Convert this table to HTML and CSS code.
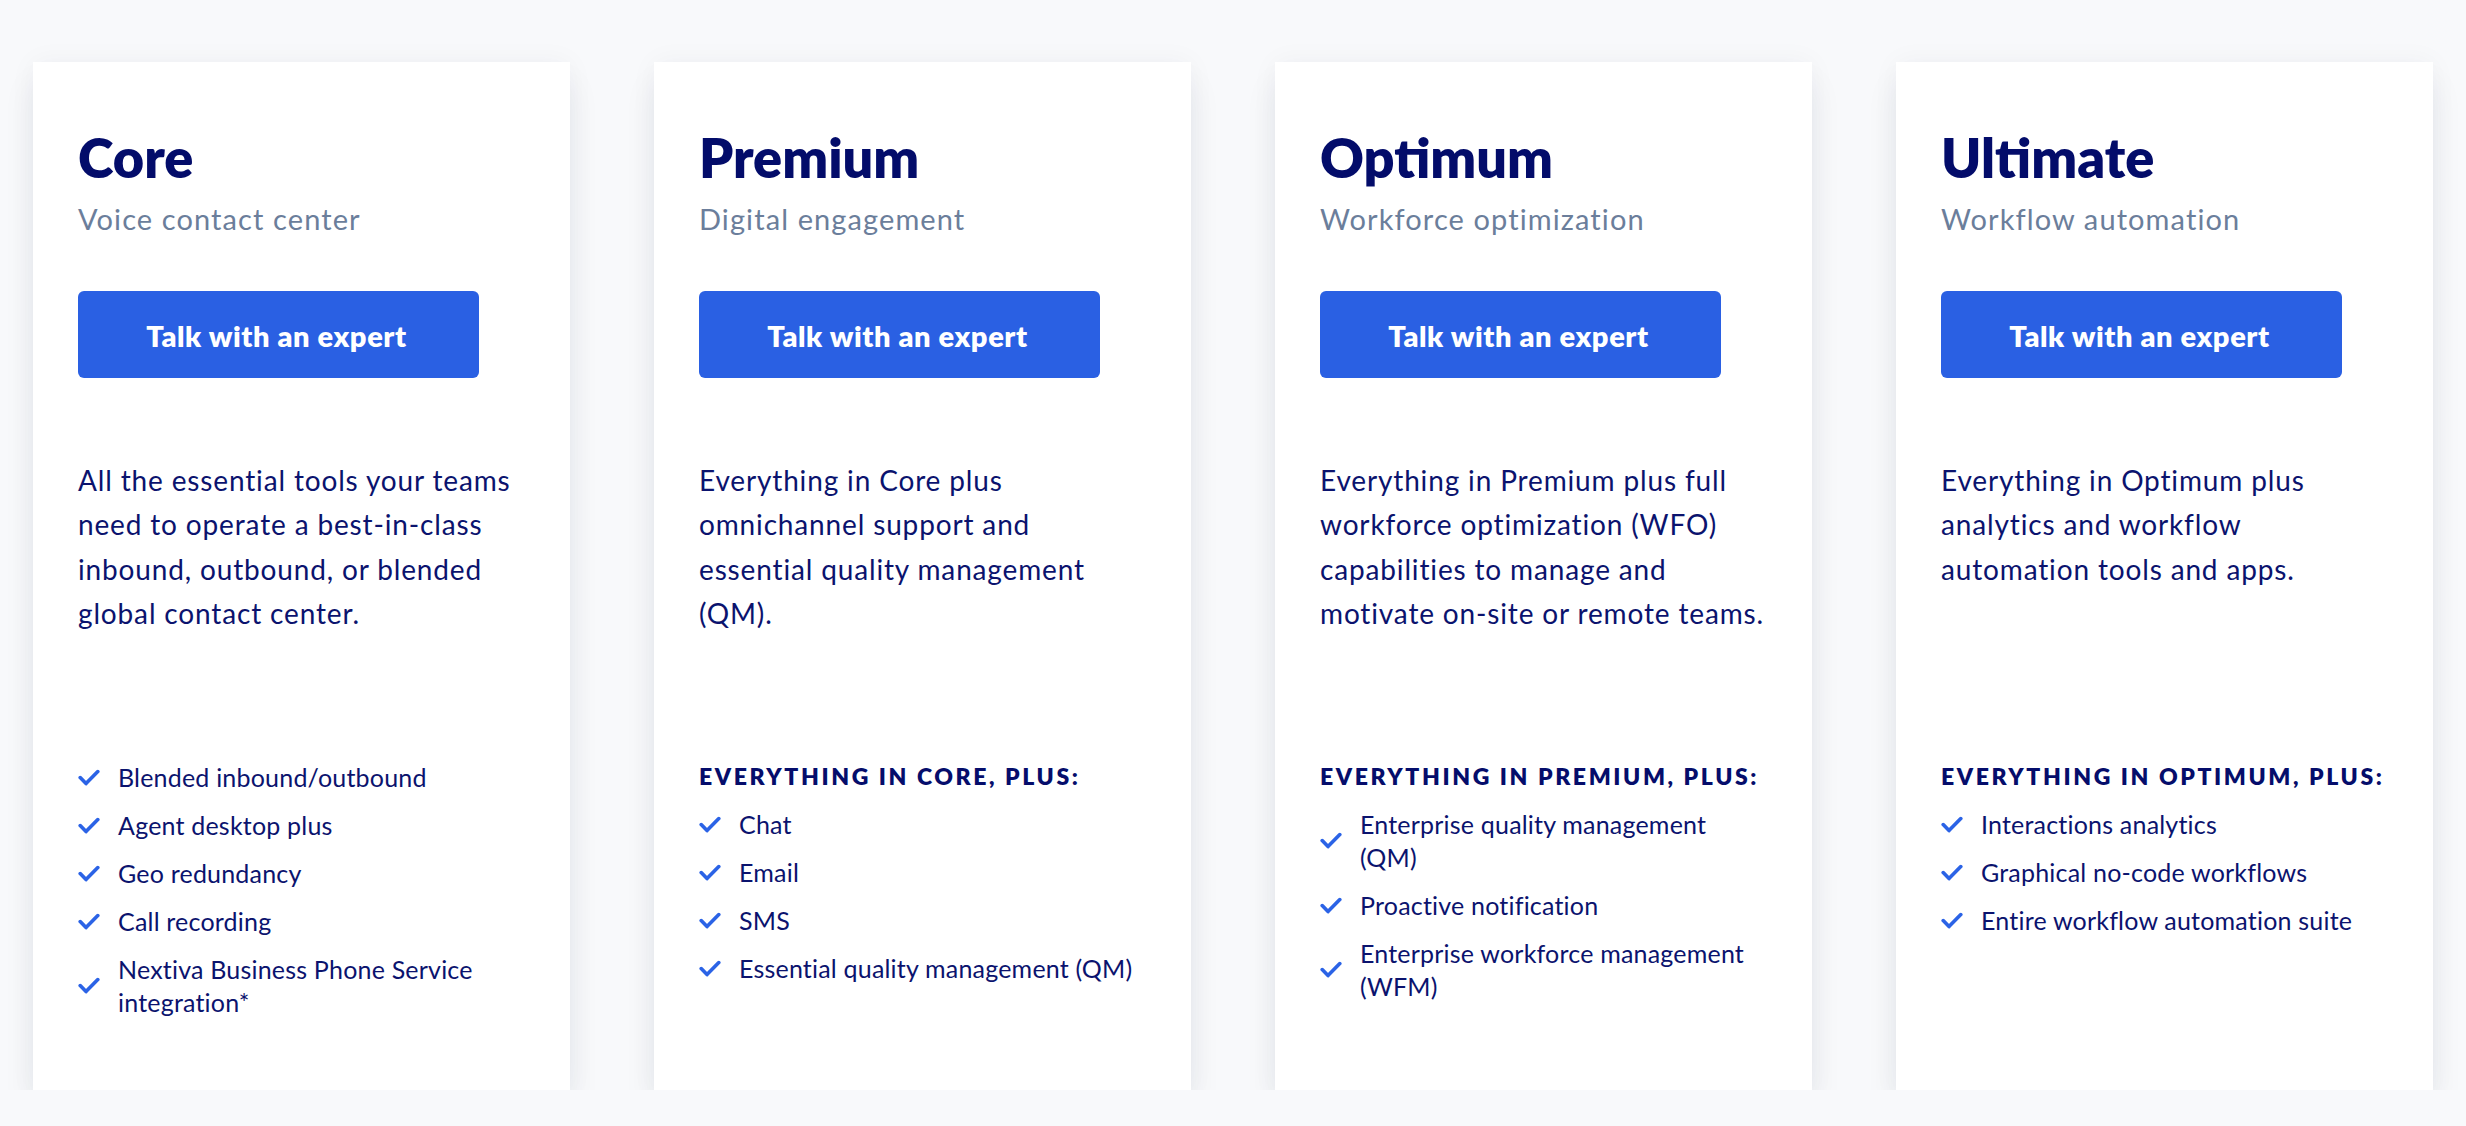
FILE: index.html
```html
<!DOCTYPE html>
<html lang="en">
<head>
<meta charset="utf-8">
<title>Plans</title>
<link rel="stylesheet" href="styles.css">
</head>
<body>
<main class="plans">
  <section class="card">
    <h2 class="title">Core</h2>
    <p class="subtitle">Voice contact center</p>
    <a class="btn" href="#">Talk with an expert</a>
    <p class="desc">All the essential tools your teams need to operate a best-in-class inbound, outbound, or blended global contact center.</p>
    <div class="features">
      <ul class="list">
        <li class="item"><svg class="check" viewBox="0 0 22 18"><polyline points="2.2,8.6 8,14.6 19.8,2.6"/></svg><span>Blended inbound/outbound</span></li>
        <li class="item"><svg class="check" viewBox="0 0 22 18"><polyline points="2.2,8.6 8,14.6 19.8,2.6"/></svg><span>Agent desktop plus</span></li>
        <li class="item"><svg class="check" viewBox="0 0 22 18"><polyline points="2.2,8.6 8,14.6 19.8,2.6"/></svg><span>Geo redundancy</span></li>
        <li class="item"><svg class="check" viewBox="0 0 22 18"><polyline points="2.2,8.6 8,14.6 19.8,2.6"/></svg><span>Call recording</span></li>
        <li class="item"><svg class="check" viewBox="0 0 22 18"><polyline points="2.2,8.6 8,14.6 19.8,2.6"/></svg><span>Nextiva Business Phone Service integration*</span></li>
      </ul>
    </div>
  </section>
  <section class="card">
    <h2 class="title">Premium</h2>
    <p class="subtitle">Digital engagement</p>
    <a class="btn" href="#">Talk with an expert</a>
    <p class="desc">Everything in Core plus omnichannel support and essential quality management (QM).</p>
    <div class="features">
      <h3 class="features-head">Everything in Core, plus:</h3>
      <ul class="list">
        <li class="item"><svg class="check" viewBox="0 0 22 18"><polyline points="2.2,8.6 8,14.6 19.8,2.6"/></svg><span>Chat</span></li>
        <li class="item"><svg class="check" viewBox="0 0 22 18"><polyline points="2.2,8.6 8,14.6 19.8,2.6"/></svg><span>Email</span></li>
        <li class="item"><svg class="check" viewBox="0 0 22 18"><polyline points="2.2,8.6 8,14.6 19.8,2.6"/></svg><span>SMS</span></li>
        <li class="item"><svg class="check" viewBox="0 0 22 18"><polyline points="2.2,8.6 8,14.6 19.8,2.6"/></svg><span>Essential quality management (QM)</span></li>
      </ul>
    </div>
  </section>
  <section class="card">
    <h2 class="title">Optimum</h2>
    <p class="subtitle">Workforce optimization</p>
    <a class="btn" href="#">Talk with an expert</a>
    <p class="desc">Everything in Premium plus full workforce optimization (WFO) capabilities to manage and motivate on-site or remote teams.</p>
    <div class="features">
      <h3 class="features-head">Everything in Premium, plus:</h3>
      <ul class="list">
        <li class="item"><svg class="check" viewBox="0 0 22 18"><polyline points="2.2,8.6 8,14.6 19.8,2.6"/></svg><span>Enterprise quality management (QM)</span></li>
        <li class="item"><svg class="check" viewBox="0 0 22 18"><polyline points="2.2,8.6 8,14.6 19.8,2.6"/></svg><span>Proactive notification</span></li>
        <li class="item"><svg class="check" viewBox="0 0 22 18"><polyline points="2.2,8.6 8,14.6 19.8,2.6"/></svg><span>Enterprise workforce management (WFM)</span></li>
      </ul>
    </div>
  </section>
  <section class="card">
    <h2 class="title">Ultimate</h2>
    <p class="subtitle">Workflow automation</p>
    <a class="btn" href="#">Talk with an expert</a>
    <p class="desc">Everything in Optimum plus analytics and workflow automation tools and apps.</p>
    <div class="features">
      <h3 class="features-head">Everything in Optimum, plus:</h3>
      <ul class="list">
        <li class="item"><svg class="check" viewBox="0 0 22 18"><polyline points="2.2,8.6 8,14.6 19.8,2.6"/></svg><span>Interactions analytics</span></li>
        <li class="item"><svg class="check" viewBox="0 0 22 18"><polyline points="2.2,8.6 8,14.6 19.8,2.6"/></svg><span>Graphical no-code workflows</span></li>
        <li class="item"><svg class="check" viewBox="0 0 22 18"><polyline points="2.2,8.6 8,14.6 19.8,2.6"/></svg><span>Entire workflow automation suite</span></li>
      </ul>
    </div>
  </section>
</main>
</body>
</html>
```

FILE: styles.css
```css
* { box-sizing: border-box; }

html, body {
  margin: 0;
  padding: 0;
  background: #f8f9fb;
  font-family: Lato, "Noto Sans", "Liberation Sans", sans-serif;
}

.plans {
  display: grid;
  grid-template-columns: repeat(4, 537px);
  column-gap: 84px;
  padding: 62px 33px 0 33px;
}

.card {
  background: #ffffff;
  min-height: 1028px;
  padding: 64px 47px 60px 45px;
  box-shadow: 0 22px 30px rgba(30, 40, 70, 0.075), 0 0 26px rgba(30, 40, 70, 0.045);
  display: flex;
  flex-direction: column;
  align-items: flex-start;
}

.title {
  margin: 0;
  font-size: 54px;
  line-height: 64px;
  font-weight: 800;
  color: #030c6a;
}

.subtitle {
  margin: 9px 0 0 0;
  font-size: 29px;
  line-height: 40px;
  letter-spacing: 1.1px;
  color: #6b7e9b;
}

.btn {
  margin-top: 52px;
  width: 401px;
  height: 87px;
  border-radius: 6px;
  background: #2a60e3;
  color: #ffffff;
  font-size: 29px;
  font-weight: 800;
  letter-spacing: 0.6px;
  text-decoration: none;
  display: flex;
  align-items: center;
  justify-content: center;
  padding: 2px 4px 0 0;
}

.desc {
  align-self: stretch;
  margin: 80px -6px 0 0;
  min-height: 303px;
  font-size: 28px;
  line-height: 44.4px;
  letter-spacing: 0.85px;
  color: #0b136e;
}

.features {
  width: 100%;
}

.features-head {
  margin: 0 0 17px 0;
  font-size: 23px;
  line-height: 30px;
  font-weight: 800;
  letter-spacing: 2.6px;
  text-transform: uppercase;
  color: #050d6b;
  white-space: nowrap;
}

.list {
  list-style: none;
  margin: 0;
  padding: 0;
  display: flex;
  flex-direction: column;
  gap: 15px;
}

.item {
  display: flex;
  align-items: center;
  gap: 18px;
  font-size: 25px;
  line-height: 33px;
  letter-spacing: 0.2px;
  color: #0b136e;
}

.check {
  flex: 0 0 22px;
  width: 22px;
  height: 18px;
}

.check polyline {
  fill: none;
  stroke: #2b63e6;
  stroke-width: 3.6;
  stroke-linecap: round;
  stroke-linejoin: round;
}
```
